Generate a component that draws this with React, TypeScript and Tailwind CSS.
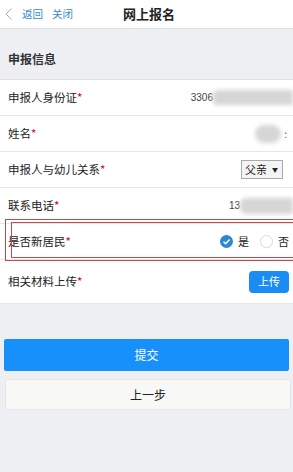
const font = { fontFamily: '"Noto Sans CJK SC", "Liberation Sans", sans-serif' };

function Star() {
  return <span className="text-[#d0021b]">*</span>;
}

function Row({ label, children, tall }: { label: string; children?: React.ReactNode; tall?: boolean }) {
  return (
    <div className={`flex items-center justify-between pl-2 ${tall ? 'h-[44px]' : 'h-[36px]'} border-b border-[#e6e6e6]`}>
      <span className="text-[11.5px] text-[#222]">
        {label}
        <Star />
      </span>
      {children}
    </div>
  );
}

function Blob({ className }: { className: string }) {
  return <div className={`bg-[#d6d6d6] blur-[2px] ${className}`} />;
}

export default function App() {
  return (
    <div className="relative w-[293px] h-[472px] bg-[#eeeff3] overflow-hidden" style={font}>
      <div className="flex items-center h-[29px] bg-white border-b border-[#e2e2e2] relative">
        <svg width="10" height="14" viewBox="0 0 10 14" className="ml-[4px]">
          <path d="M7.5 1.5 L2 7 L7.5 12.5" fill="none" stroke="#9db2c8" strokeWidth="1" />
        </svg>
        <span className="ml-[8px] text-[10.5px] text-[#3b8bd0]">返回</span>
        <span className="ml-[9px] text-[10.5px] text-[#3b8bd0]">关闭</span>
        <span className="absolute left-[123px] text-[13px] font-bold text-[#222]">网上报名</span>
      </div>

      <div className="h-[51px] flex items-end pb-[11px] pl-2 border-b border-[#e2e2e2]">
        <span className="text-[12px] font-bold text-[#333]">申报信息</span>
      </div>

      <div className="bg-white">
        <Row label="申报人身份证">
          <div className="flex items-center">
            <span className="text-[10px] text-[#444]" style={{ fontFamily: '"Liberation Sans", sans-serif' }}>3306</span>
            <Blob className="w-[80px] h-[15px] rounded-l-[4px]" />
          </div>
        </Row>
        <Row label="姓名">
          <div className="flex items-center mr-[6px]">
            <Blob className="w-[26px] h-[18px] rounded-full" />
            <span className="text-[10px] text-[#555] ml-[3px]">:</span>
          </div>
        </Row>
        <Row label="申报人与幼儿关系">
          <div className="mr-[10px] flex items-center justify-between w-[42px] h-[19px] border border-[#aaa] bg-[#f4f4f4] pl-[3px] pr-[4px]">
            <span className="text-[11px] text-[#222]">父亲</span>
            <span className="text-[6px] text-[#222]">▼</span>
          </div>
        </Row>
        <Row label="联系电话">
          <div className="flex items-center">
            <span className="text-[10px] text-[#444]" style={{ fontFamily: '"Liberation Sans", sans-serif' }}>13</span>
            <Blob className="w-[53px] h-[16px] rounded-l-[6px]" />
          </div>
        </Row>
        <Row label="是否新居民">
          <div className="flex items-center text-[11px] text-[#222] mr-[4px]">
            <svg width="13" height="13" viewBox="0 0 13 13">
              <circle cx="6.5" cy="6.5" r="6.5" fill="#2f86d2" />
              <path d="M3.5 6.7 L5.6 8.8 L9.6 4.6" fill="none" stroke="#fff" strokeWidth="1.5" />
            </svg>
            <span className="ml-[5px]">是</span>
            <svg width="13" height="13" viewBox="0 0 13 13" className="ml-[11px]">
              <circle cx="6.5" cy="6.5" r="6" fill="#fff" stroke="#d8d8d8" />
            </svg>
            <span className="ml-[5px]">否</span>
          </div>
        </Row>
        <Row label="相关材料上传" tall>
          <button className="mr-[4px] w-[40px] h-[22px] rounded-[4px] bg-[#1a8cf3] text-white text-[11px]">上传</button>
        </Row>
      </div>

      <div className="px-[4px] pt-[35px] flex flex-col gap-[8px]">
        <button className="h-[32px] w-full bg-[#1890fb] text-white text-[12px] rounded-[2px]">提交</button>
        <button className="h-[31px] w-[286px] ml-[1px] bg-[#f8f8f6] border border-[#e6e6e6] text-[#222] text-[12px] rounded-[2px]">上一步</button>
      </div>

      <div className="absolute left-[5px] top-[219px] w-[300px] h-[42px] border border-[#c44a4a]" />
      <div className="absolute left-[11px] top-[222px] w-[300px] h-[36px] border border-[#c44a4a]" />
    </div>
  );
}
